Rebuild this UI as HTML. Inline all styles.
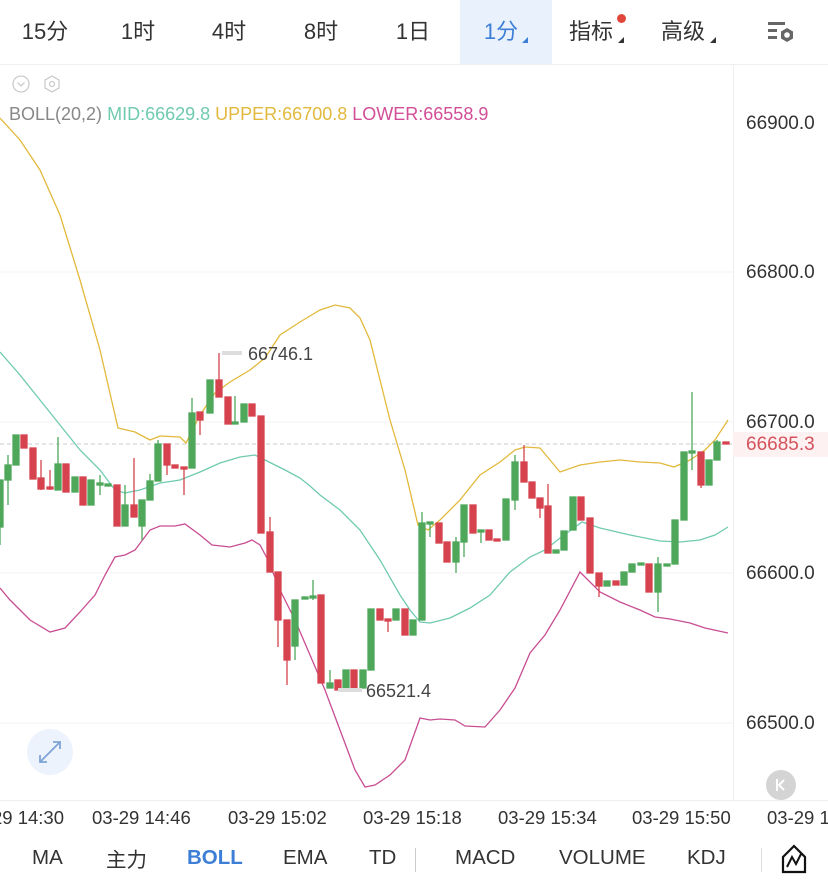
<!DOCTYPE html>
<html><head><meta charset="utf-8"><style>
*{margin:0;padding:0;box-sizing:border-box}
body{width:828px;height:883px;overflow:hidden;background:#fff;font-family:"Liberation Sans","Noto Sans CJK SC",sans-serif;position:relative}
.tab{position:absolute;top:0;height:64px;line-height:64px;font-size:22px;color:#333;text-align:center}
.tri{position:absolute;width:0;height:0;border-left:6px solid transparent;border-bottom:6px solid #333}
.ax{position:absolute;font-size:19px;line-height:20px;color:#333}
.tm{position:absolute;top:808px;font-size:18.5px;line-height:20px;color:#333;white-space:nowrap}
.bt{position:absolute;top:846px;font-size:20.5px;line-height:24px;height:24px;color:#333;white-space:nowrap}
</style></head><body>
<div style="position:absolute;left:460px;top:0;width:92px;height:64px;background:#e9f1fc"></div>
<div class="tab" style="left:10px;width:70px">15分</div>
<div class="tab" style="left:103px;width:70px">1时</div>
<div class="tab" style="left:194px;width:70px">4时</div>
<div class="tab" style="left:286px;width:70px">8时</div>
<div class="tab" style="left:378px;width:70px">1日</div>
<div class="tab" style="left:466px;width:70px;color:#3d7fd6">1分</div>
<div class="tri" style="left:522px;top:37px;border-bottom-color:#3d7fd6"></div>
<div class="tab" style="left:556px;width:70px">指标</div>
<div class="tri" style="left:618px;top:37px"></div>
<div style="position:absolute;left:617px;top:14px;width:9px;height:9px;border-radius:50%;background:#e0473c"></div>
<div class="tab" style="left:648px;width:70px">高级</div>
<div class="tri" style="left:710px;top:37px"></div>
<svg style="position:absolute;left:766px;top:20px" width="30" height="26"><g fill="#666"><rect x="2" y="2" width="17" height="3"/><rect x="2" y="9" width="9" height="3"/><rect x="2" y="16" width="9" height="3"/><polygon points="21,8 27,11.5 27,18.5 21,22 15,18.5 15,11.5"/></g><circle cx="21" cy="15" r="2.8" fill="#fff"/></svg>
<div style="position:absolute;left:0;top:64px;width:828px;height:1px;background:#f0f0f0"></div>
<div style="position:absolute;left:733px;top:65px;width:1px;height:736px;background:#eee"></div>
<svg style="position:absolute;left:10px;top:73px" width="50" height="22"><circle cx="11" cy="11" r="8" fill="none" stroke="#ccc" stroke-width="1.3"/><path d="M7.5 9.5 L11 13 L14.5 9.5" fill="none" stroke="#ccc" stroke-width="1.3"/><polygon points="43,3 50,7 50,15 43,19 36,15 36,7" transform="translate(-1,0)" fill="none" stroke="#ccc" stroke-width="1.3"/><circle cx="42" cy="11" r="2.5" fill="none" stroke="#ccc" stroke-width="1.3"/></svg>
<div style="position:absolute;left:9px;top:104px;font-size:18px;line-height:20px;white-space:nowrap"><span style="color:#888">BOLL(20,2)</span> <span style="color:#6fcab0">MID:66629.8</span> <span style="color:#e2b93c">UPPER:66700.8</span> <span style="color:#d24e97">LOWER:66558.9</span></div>
<div class="ax" style="left:746px;top:114px">66900.0</div>
<div class="ax" style="left:746px;top:263px">66800.0</div>
<div class="ax" style="left:746px;top:413px">66700.0</div>
<div class="ax" style="left:746px;top:564px">66600.0</div>
<div class="ax" style="left:746px;top:714px">66500.0</div>
<div style="position:absolute;left:733px;top:432px;width:95px;height:25px;background:#fdf1f1"></div>
<div class="ax" style="left:746px;top:435px;color:#d4535d">66685.3</div>
<svg style="position:absolute;left:0;top:0" width="733" height="800">
<g stroke="#f3f3f3" stroke-width="1"><line x1="0" y1="272" x2="733" y2="272"/><line x1="0" y1="422" x2="733" y2="422"/><line x1="0" y1="573" x2="733" y2="573"/><line x1="0" y1="723" x2="733" y2="723"/></g>
<line x1="0" y1="444" x2="733" y2="444" stroke="#bbb" stroke-dasharray="4,3" stroke-width="0.8"/>
<polyline fill="none" stroke="#e2b93c" stroke-width="1.3" points="0,118 20,140 40,170 60,215 80,280 100,350 118,428 135,432 150,440 160,436 180,437 186,443 200,415 215,393 230,382 250,370 265,358 280,335 300,322 320,310 335,305 350,308 360,318 370,340 380,380 390,420 405,470 418,525 428,530 440,520 460,500 480,475 500,462 515,450 525,447 540,448 550,460 560,472 580,465 600,462 620,460 640,462 660,463 674,467 690,460 705,450 715,440 728,420"/>
<polyline fill="none" stroke="#6fcab0" stroke-width="1.3" points="0,352 20,375 40,400 60,425 80,450 100,470 115,490 125,493 140,490 160,483 180,480 200,472 220,463 240,457 255,455 265,460 285,470 300,478 310,486 320,495 340,510 360,530 380,560 400,595 410,610 420,622 430,623 450,618 470,608 490,595 510,572 530,557 545,550 560,538 582,522 600,528 630,535 660,541 680,542 700,540 715,535 728,527"/>
<polyline fill="none" stroke="#c84d92" stroke-width="1.3" points="0,588 10,600 30,620 50,632 65,628 80,612 95,595 105,575 115,557 125,555 135,550 150,530 160,526 175,526 185,524 200,535 212,545 230,547 245,543 252,540 260,545 268,560 280,590 295,620 310,655 325,690 340,730 355,770 365,787 375,785 390,775 405,760 420,718 430,720 440,719 455,720 465,726 485,727 500,710 515,688 530,653 545,635 560,610 580,572 600,592 620,602 640,610 655,617 670,619 690,623 705,628 728,633"/>
<g fill="#4fa75a" stroke="#4fa75a" stroke-width="1.3">
<line x1="0" y1="480" x2="0" y2="545"/><rect x="-3" y="480" width="6" height="47"/>
<line x1="8" y1="455" x2="8" y2="505"/><rect x="5" y="465" width="6" height="15"/>
<rect x="13" y="435" width="6" height="30"/>
<line x1="58" y1="437" x2="58" y2="490"/><rect x="55" y="464" width="6" height="26"/>
<rect x="72" y="477" width="6" height="15"/>
<rect x="88" y="480" width="6" height="25"/>
<line x1="100" y1="475" x2="100" y2="495"/><rect x="97" y="483" width="6" height="2"/>
<rect x="105" y="484" width="6" height="2"/>
<line x1="125" y1="485" x2="125" y2="526"/><rect x="122" y="505" width="6" height="21"/>
<line x1="142" y1="500" x2="142" y2="540"/><rect x="139" y="500" width="6" height="26"/>
<line x1="150" y1="474" x2="150" y2="500"/><rect x="147" y="481" width="6" height="19"/>
<line x1="158" y1="440" x2="158" y2="481"/><rect x="155" y="444" width="6" height="37"/>
<line x1="192" y1="398" x2="192" y2="468"/><rect x="189" y="413" width="6" height="55"/>
<rect x="207" y="380" width="6" height="33"/>
<line x1="235" y1="396" x2="235" y2="424"/><rect x="232" y="422" width="6" height="2"/>
<rect x="241" y="404" width="6" height="18"/>
<line x1="295" y1="600" x2="295" y2="660"/><rect x="292" y="600" width="6" height="46"/>
<rect x="302" y="597" width="6" height="2"/>
<line x1="313" y1="580" x2="313" y2="600"/><rect x="310" y="596" width="6" height="2"/>
<line x1="330" y1="670" x2="330" y2="688"/><rect x="327" y="683" width="6" height="5"/>
<rect x="343" y="670" width="6" height="18"/>
<rect x="360" y="670" width="6" height="18"/>
<rect x="368" y="609" width="6" height="61"/>
<rect x="393" y="609" width="6" height="11"/>
<rect x="410" y="620" width="6" height="15"/>
<line x1="422" y1="512" x2="422" y2="620"/><rect x="419" y="523" width="6" height="97"/>
<line x1="430" y1="522" x2="430" y2="537"/><rect x="427" y="522" width="6" height="2"/>
<line x1="456" y1="537" x2="456" y2="573"/><rect x="453" y="542" width="6" height="20"/>
<line x1="464" y1="505" x2="464" y2="557"/><rect x="461" y="505" width="6" height="37"/>
<line x1="481" y1="530" x2="481" y2="543"/><rect x="478" y="530" width="6" height="2"/>
<rect x="503" y="499" width="6" height="41"/>
<line x1="515" y1="455" x2="515" y2="510"/><rect x="512" y="462" width="6" height="38"/>
<rect x="553" y="550" width="6" height="3"/>
<rect x="561" y="531" width="6" height="19"/>
<rect x="570" y="497" width="6" height="33"/>
<rect x="604" y="581" width="6" height="5"/>
<rect x="621" y="572" width="6" height="13"/>
<rect x="629" y="564" width="6" height="8"/>
<rect x="638" y="563" width="6" height="2"/>
<line x1="658" y1="557" x2="658" y2="612"/><rect x="655" y="564" width="6" height="28"/>
<rect x="664" y="564" width="6" height="2"/>
<rect x="672" y="520" width="6" height="44"/>
<rect x="681" y="452" width="6" height="68"/>
<line x1="692" y1="392" x2="692" y2="470"/><rect x="689" y="451" width="6" height="2"/>
<rect x="706" y="460" width="6" height="25"/>
<line x1="717" y1="440" x2="717" y2="460"/><rect x="714" y="442" width="6" height="18"/>
</g>
<g fill="#d6434f" stroke="#d6434f" stroke-width="1.3">
<rect x="21" y="435" width="6" height="13"/>
<rect x="30" y="448" width="6" height="31"/>
<line x1="41" y1="460" x2="41" y2="490"/><rect x="38" y="478" width="6" height="11"/>
<line x1="50" y1="470" x2="50" y2="490"/><rect x="47" y="487" width="6" height="2"/>
<rect x="63" y="464" width="6" height="28"/>
<rect x="80" y="477" width="6" height="28"/>
<rect x="114" y="485" width="6" height="41"/>
<line x1="134" y1="458" x2="134" y2="517"/><rect x="131" y="505" width="6" height="12"/>
<line x1="167" y1="444" x2="167" y2="475"/><rect x="164" y="444" width="6" height="21"/>
<rect x="172" y="465" width="6" height="3"/>
<line x1="184" y1="467" x2="184" y2="495"/><rect x="181" y="467" width="6" height="2"/>
<line x1="200" y1="412" x2="200" y2="435"/><rect x="197" y="412" width="6" height="8"/>
<line x1="219" y1="353" x2="219" y2="397"/><rect x="216" y="380" width="6" height="17"/>
<rect x="225" y="397" width="6" height="27"/>
<rect x="249" y="404" width="6" height="12"/>
<rect x="258" y="416" width="6" height="117"/>
<line x1="270" y1="517" x2="270" y2="572"/><rect x="267" y="532" width="6" height="40"/>
<line x1="278" y1="572" x2="278" y2="647"/><rect x="275" y="572" width="6" height="48"/>
<line x1="287" y1="620" x2="287" y2="685"/><rect x="284" y="620" width="6" height="40"/>
<rect x="318" y="595" width="6" height="88"/>
<rect x="335" y="680" width="6" height="10"/>
<rect x="351" y="670" width="6" height="18"/>
<rect x="377" y="609" width="6" height="11"/>
<line x1="388" y1="619" x2="388" y2="632"/><rect x="385" y="619" width="6" height="2"/>
<rect x="402" y="609" width="6" height="26"/>
<rect x="436" y="523" width="6" height="20"/>
<rect x="444" y="542" width="6" height="20"/>
<rect x="470" y="505" width="6" height="28"/>
<rect x="486" y="530" width="6" height="10"/>
<rect x="494" y="539" width="6" height="2"/>
<line x1="524" y1="445" x2="524" y2="482"/><rect x="521" y="462" width="6" height="20"/>
<rect x="529" y="482" width="6" height="16"/>
<line x1="540" y1="498" x2="540" y2="518"/><rect x="537" y="498" width="6" height="10"/>
<line x1="548" y1="484" x2="548" y2="553"/><rect x="545" y="506" width="6" height="47"/>
<rect x="578" y="497" width="6" height="23"/>
<rect x="587" y="518" width="6" height="55"/>
<line x1="599" y1="573" x2="599" y2="597"/><rect x="596" y="573" width="6" height="13"/>
<rect x="613" y="581" width="6" height="4"/>
<rect x="646" y="564" width="6" height="28"/>
<line x1="701" y1="452" x2="701" y2="488"/><rect x="698" y="452" width="6" height="33"/>
<rect x="723" y="442" width="6" height="2"/>
</g>
<rect x="222" y="351" width="20" height="4" fill="#ddd"/>
<text x="248" y="360" font-size="18" fill="#444" font-family="Liberation Sans">66746.1</text>
<rect x="338" y="688" width="24" height="4" fill="#ddd"/>
<text x="366" y="697" font-size="18" fill="#444" font-family="Liberation Sans">66521.4</text>
<circle cx="50" cy="752" r="23" fill="#edf3fc"/>
<path d="M40 762 L60 742 M53 742 L60 742 L60 749 M40 755 L40 762 L47 762" fill="none" stroke="#7ea4d6" stroke-width="1.8"/>
</svg>
<svg style="position:absolute;left:765px;top:769px" width="32" height="32"><circle cx="16" cy="16" r="15" fill="#d4d4d4"/><path d="M12 10 V22 M19 11 L14 16 L19 21" fill="none" stroke="#fff" stroke-width="2"/></svg>
<div style="position:absolute;left:0;top:800px;width:828px;height:1px;background:#eee"></div>
<div class="tm" style="left:-8px">29 14:30</div>
<div class="tm" style="left:92px">03-29 14:46</div>
<div class="tm" style="left:228px">03-29 15:02</div>
<div class="tm" style="left:363px">03-29 15:18</div>
<div class="tm" style="left:498px">03-29 15:34</div>
<div class="tm" style="left:632px">03-29 15:50</div>
<div class="tm" style="left:767px">03-29 1</div>
<div class="bt" style="left:32px">MA</div>
<div class="bt" style="left:106px;top:845px;font-family:'Noto Sans CJK SC',sans-serif;line-height:26px">主力</div>
<div class="bt" style="left:187px;color:#3d7fd6;font-weight:bold">BOLL</div>
<div class="bt" style="left:283px">EMA</div>
<div class="bt" style="left:369px">TD</div>
<div style="position:absolute;left:415px;top:848px;width:1px;height:24px;background:#ccc"></div>
<div class="bt" style="left:455px">MACD</div>
<div class="bt" style="left:559px">VOLUME</div>
<div class="bt" style="left:687px">KDJ</div>
<div style="position:absolute;left:761px;top:848px;width:1px;height:24px;background:#ddd"></div>
<svg style="position:absolute;left:780px;top:843px" width="28" height="32"><path d="M3 14 L14 3 L25 14 V29 H3 Z" fill="none" stroke="#111" stroke-width="2.2"/><path d="M7 24 L12 14 L16 21 L21 11" fill="none" stroke="#111" stroke-width="2"/></svg>
</body></html>
